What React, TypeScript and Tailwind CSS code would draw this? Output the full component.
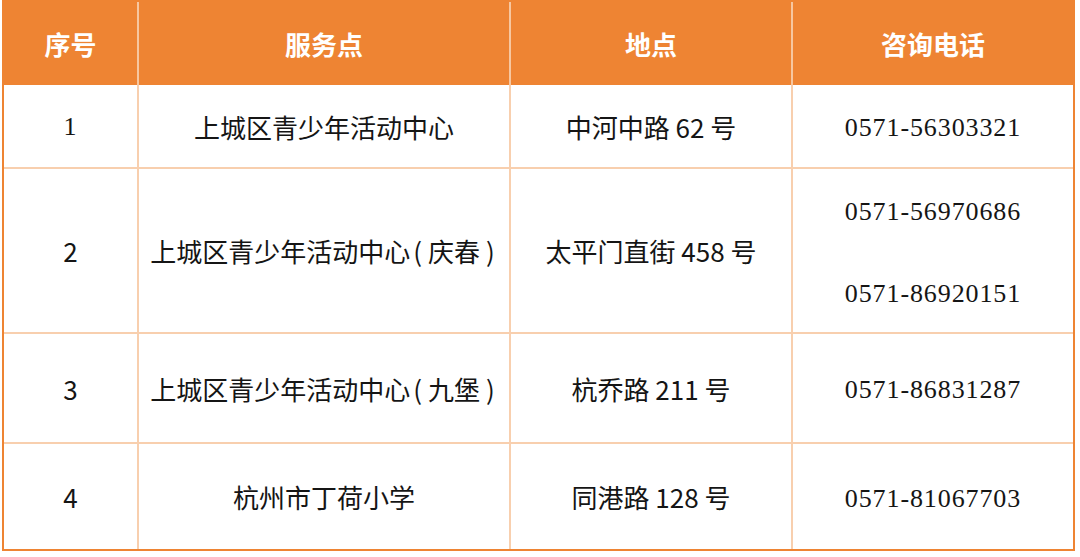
import React from 'react';

const cjk = "font-['Noto_Sans_CJK_SC',sans-serif]";
const serif = "font-['Liberation_Serif','Noto_Sans_CJK_SC',serif] text-[26px] tracking-[0.9px]";

function Branch({ base, sub }: { base: string; sub?: string }) {
  return (
    <span className="whitespace-nowrap">
      {base}
      {sub && (
        <>
          <span className="pl-[3px] pr-[6px]">(</span>
          {sub}
          <span className="pl-[6px] pr-[3px]">)</span>
        </>
      )}
    </span>
  );
}

const rows = [
  { no: '1', noSerif: true, name: '上城区青少年活动中心', addr: '中河中路 62 号', phones: ['0571-56303321'], h: 'h-[82px]' },
  { no: '2', name: '上城区青少年活动中心', sub: '庆春', addr: '太平门直街 458 号', phones: ['0571-56970686', '0571-86920151'], h: 'h-[165px]' },
  { no: '3', name: '上城区青少年活动中心', sub: '九堡', addr: '杭乔路 211 号', phones: ['0571-86831287'], h: 'h-[110px]' },
  { no: '4', name: '杭州市丁荷小学', addr: '同港路 128 号', phones: ['0571-81067703'], h: 'h-[107px]' },
];

const cols = 'grid grid-cols-[133px_372px_282px_282px]';

export default function App() {
  return (
    <div className="w-[1080px] h-[557px] bg-white pl-[2px]">
      <div className={`w-[1073px] border-2 border-[#ee8433] ${cjk}`}>
        {/* Header */}
        <div className={`${cols} h-[83px] bg-[#ee8433] text-white text-[26px] font-bold`}>
          <div className="flex items-center justify-center">序号</div>
          <div className="flex items-center justify-center border-l-2 border-[#f7c7a0]">服务点</div>
          <div className="flex items-center justify-center border-l-2 border-[#f7c7a0]">地点</div>
          <div className="flex items-center justify-center border-l-2 border-[#f7c7a0]">咨询电话</div>
        </div>
        {rows.map((r, i) => (
          <div
            key={r.no}
            className={`${cols} ${r.h} text-[#151515] text-[26px] ${i > 0 ? 'border-t-2 border-[#f8cfae]' : ''}`}
          >
            <div className={`flex items-center justify-center ${r.noSerif ? serif : ''}`}>{r.no}</div>
            <div className="flex items-center justify-center border-l-2 border-[#f8cfae]">
              <Branch base={r.name} sub={r.sub} />
            </div>
            <div className="flex items-center justify-center whitespace-nowrap border-l-2 border-[#f8cfae]">{r.addr}</div>
            <div className="flex flex-col items-center justify-center gap-[46px] border-l-2 border-[#f8cfae] pt-[4px]">
              {r.phones.map((p) => (
                <span key={p} className={`${serif} leading-[36px]`}>{p}</span>
              ))}
            </div>
          </div>
        ))}
      </div>
    </div>
  );
}
